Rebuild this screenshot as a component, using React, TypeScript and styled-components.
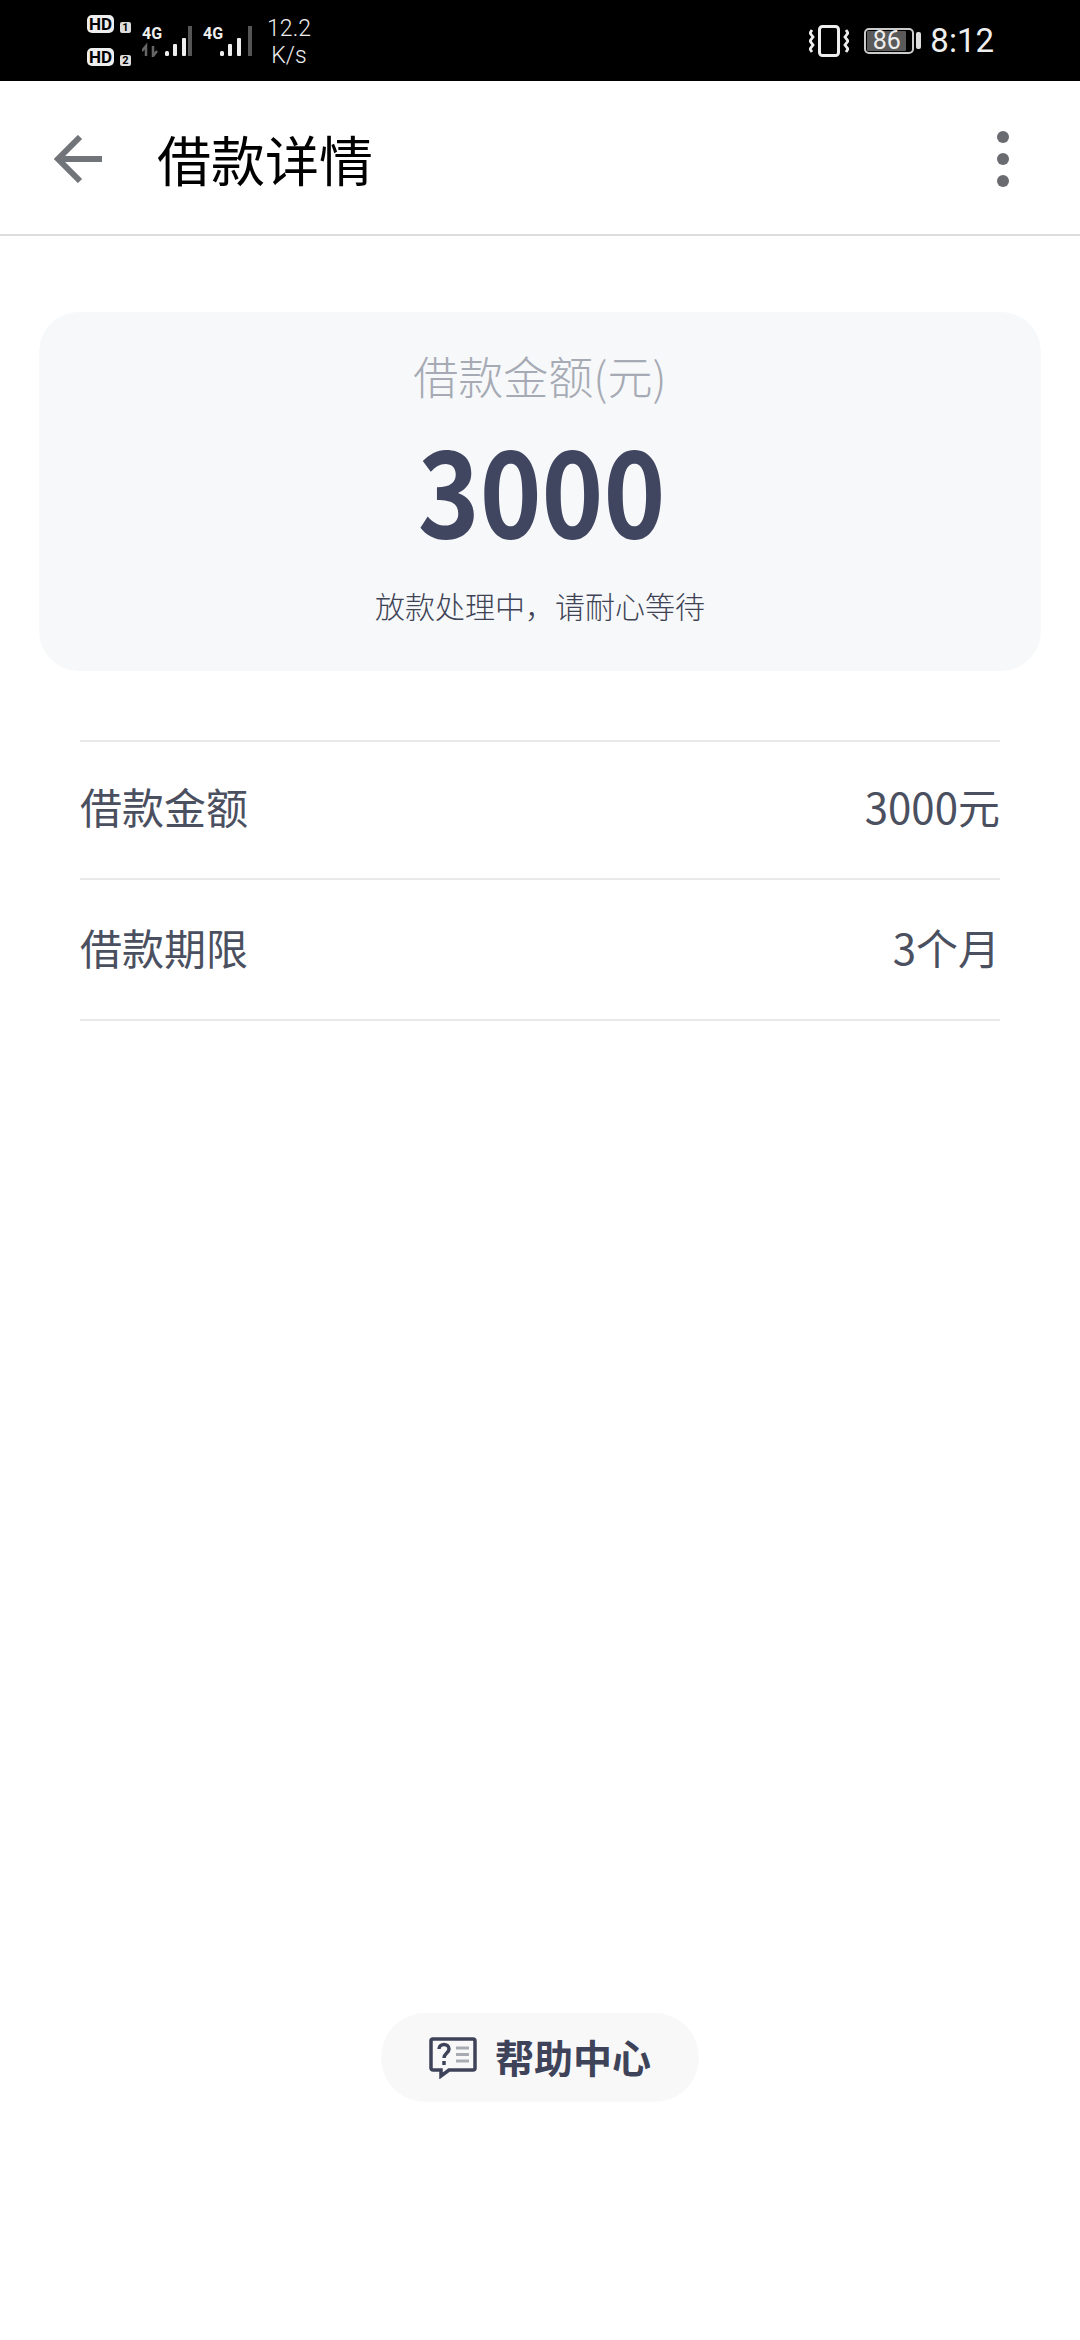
import { createGlobalStyle, styled } from "styled-components";

const GlobalStyle = createGlobalStyle`
  html, body {
    margin: 0;
    padding: 0;
    background: #fff;
  }
  body {
    font-family: "Noto Sans CJK SC", "Noto Sans", sans-serif;
  }
`;

const Page = styled.div`
  width: 1080px;
  height: 2340px;
  display: flex;
  flex-direction: column;
  align-items: center;
  overflow: hidden;
  background: #fff;
`;

const StatusBar = styled.div`
  width: 100%;
  height: 81px;
  box-sizing: border-box;
  padding: 0 86px 0 87px;
  display: flex;
  align-items: center;
  background: #000;
  color: #eee;
  font-family: Roboto, sans-serif;
`;

const SimColumn = styled.div`
  width: 55px;
  display: flex;
  flex-direction: column;
  gap: 15px;
`;

const SimRow = styled.div`
  display: flex;
  align-items: flex-end;
  gap: 6px;
`;

const HdBadge = styled.span`
  width: 27px;
  height: 18px;
  border-radius: 5px;
  background: #eee;
  color: #000;
  font-size: 17px;
  font-weight: 700;
  line-height: 18px;
  text-align: center;
`;

const SimBadge = styled.span`
  width: 11px;
  height: 11px;
  border-radius: 2px;
  background: #ddd;
  color: #000;
  font-size: 11px;
  font-weight: 700;
  line-height: 11px;
  text-align: center;
`;

const Signal = styled.svg`
  display: block;
  flex: none;
  margin-right: 11px;
`;

const Speed = styled.div`
  margin: 3px 0 0 2px;
  width: 46px;
  font-size: 23px;
  line-height: 27px;
  text-align: center;
  font-weight: 300;
`;

const RightStatus = styled.div`
  margin-left: auto;
  display: flex;
  align-items: center;
`;

const Battery = styled.div`
  width: 50px;
  height: 26px;
  box-sizing: border-box;
  margin-left: 15px;
  padding: 1px;
  border: 2px solid #ccc;
  border-radius: 5px;
  display: flex;
`;

const BatteryFill = styled.div`
  width: 39px;
  background: #5a5a5a;
  border-radius: 1px;
  font-size: 25px;
  line-height: 20px;
  color: #eee;
  text-align: center;
`;

const BatteryTip = styled.div`
  width: 5px;
  height: 17px;
  margin-left: 2px;
  border-radius: 2px;
  background: #ddd;
`;

const Clock = styled.div`
  margin-left: 9px;
  font-size: 33px;
  font-weight: 400;
`;

const Header = styled.header`
  width: 100%;
  height: 155px;
  box-sizing: border-box;
  padding: 3px 71px 0 54px;
  display: flex;
  align-items: center;
  border-bottom: 2px solid #dcdcdc;
`;

const Title = styled.h1`
  margin: 0 0 0 55px;
  font-size: 54px;
  font-weight: 400;
  line-height: 60px;
  color: #000;
`;

const MoreDots = styled.div`
  margin-left: auto;
  display: flex;
  flex-direction: column;
  gap: 10px;
`;

const Dot = styled.span`
  width: 12px;
  height: 12px;
  border-radius: 50%;
  background: #6a6b70;
`;

const Card = styled.section`
  width: 1002px;
  height: 359px;
  box-sizing: border-box;
  margin-top: 76px;
  padding-top: 36px;
  border-radius: 40px;
  background: #f6f8fa;
  display: flex;
  flex-direction: column;
  align-items: center;
`;

const CardLabel = styled.div`
  font-size: 45px;
  line-height: 56px;
  font-weight: 300;
  color: #a6aab4;
`;

const CardAmount = styled.div`
  margin: 16px 0 0 3px;
  font-size: 120px;
  line-height: 132px;
  font-weight: 700;
  color: #404560;
  transform: scaleX(0.875);
`;

const CardNote = styled.div`
  margin-top: 31px;
  font-size: 30px;
  line-height: 44px;
  font-weight: 300;
  color: #3f4355;
`;

const Rows = styled.div`
  width: 920px;
  margin-top: 69px;
  border-top: 2px solid #e8e9ea;
`;

const Row = styled.div<{ $height: number; $lift: number }>`
  height: ${(props) => props.$height}px;
  box-sizing: border-box;
  padding-bottom: ${(props) => props.$lift}px;
  display: flex;
  justify-content: space-between;
  align-items: center;
  border-bottom: 2px solid #e8e9ea;
  font-size: 42px;
  font-weight: 400;
  color: #4b5060;
`;

const HelpPill = styled.div`
  width: 318px;
  height: 89px;
  margin-top: 992px;
  padding-bottom: 4px;
  box-sizing: border-box;
  border-radius: 45px;
  background: #f8f8f9;
  display: flex;
  align-items: center;
  justify-content: center;
  gap: 18px;
  font-size: 39px;
  font-weight: 700;
  color: #3e4359;
`;

const HelpIcon = styled.svg`
  margin-top: 4px;
`;

function SignalBars({ arrows }: { arrows?: boolean }) {
  const x = arrows ? [23, 31, 40, 46] : [17, 25, 34, 45];
  return (
    <Signal width="50" height="32" viewBox="0 0 50 32">
      <text x="0" y="14" fill="#eee" fontSize="16" fontWeight="700" fontFamily="Roboto, sans-serif">
        4G
      </text>
      {arrows && (
        <path d="M4 31v-10l-4 5M11 21v10l4-5" fill="none" stroke="#666" strokeWidth="2.5" />
      )}
      <rect x={x[0]} y="26" width="4" height="5" rx="1.5" fill="#eee" />
      <rect x={x[1]} y="19" width="4" height="12" rx="1" fill="#eee" />
      <rect x={x[2]} y="13" width="4" height="18" rx="1" fill="#eee" />
      <rect x={x[3]} y="1" width="4" height="30" fill="#555" />
    </Signal>
  );
}

function App() {
  return (
    <Page>
      <GlobalStyle />
      <StatusBar>
        <SimColumn>
          <SimRow>
            <HdBadge>HD</HdBadge>
            <SimBadge>1</SimBadge>
          </SimRow>
          <SimRow>
            <HdBadge>HD</HdBadge>
            <SimBadge>2</SimBadge>
          </SimRow>
        </SimColumn>
        <SignalBars arrows />
        <SignalBars />
        <Speed>
          12.2
          <br />
          K/s
        </Speed>
        <RightStatus>
          <svg width="40" height="32" viewBox="0 0 40 32" fill="none" stroke="#eee">
            <rect x="10.5" y="1.500" width="19" height="29" rx="3" strokeWidth="3" />
            <path d="M3 5l-2 3 3 4-3 4 3 4-3 4 2 3M37 5l2 3-3 4 3 4-3 4 3 4-2 3" strokeWidth="2.8" />
          </svg>
          <Battery>
            <BatteryFill>86</BatteryFill>
          </Battery>
          <BatteryTip />
          <Clock>8:12</Clock>
        </RightStatus>
      </StatusBar>

      <Header>
        <svg width="48" height="48" viewBox="0 0 48 48" fill="none" stroke="#717479" strokeWidth="6">
          <path d="M48 24H4M26 2L4 24l22 22" />
        </svg>
        <Title>借款详情</Title>
        <MoreDots>
          <Dot />
          <Dot />
          <Dot />
        </MoreDots>
      </Header>

      <Card>
        <CardLabel>借款金额(元)</CardLabel>
        <CardAmount>3000</CardAmount>
        <CardNote>放款处理中，请耐心等待</CardNote>
      </Card>

      <Rows>
        <Row $height={138} $lift={10}>
          <span>借款金额</span>
          <span>3000元</span>
        </Row>
        <Row $height={141} $lift={6}>
          <span>借款期限</span>
          <span>3个月</span>
        </Row>
      </Rows>

      <HelpPill>
        <HelpIcon width="48" height="42" viewBox="0 0 48 42" fill="none">
          <path d="M4 2h40a2 2 0 0 1 2 2v27a2 2 0 0 1-2 2H20l-8 6v-6H4a2 2 0 0 1-2-2V4a2 2 0 0 1 2-2z" stroke="#3e4359" strokeWidth="3.500" />
          <path d="M10 12c0-6 10-6 10 0 0 4-5 4-5 9M15 24v4" stroke="#3e4359" strokeWidth="3.500" />
          <path d="M27 11h13M27 17.500h13M27 24h13" stroke="#a9abb2" strokeWidth="3" />
        </HelpIcon>
        帮助中心
      </HelpPill>
    </Page>
  );
}

export default App;
